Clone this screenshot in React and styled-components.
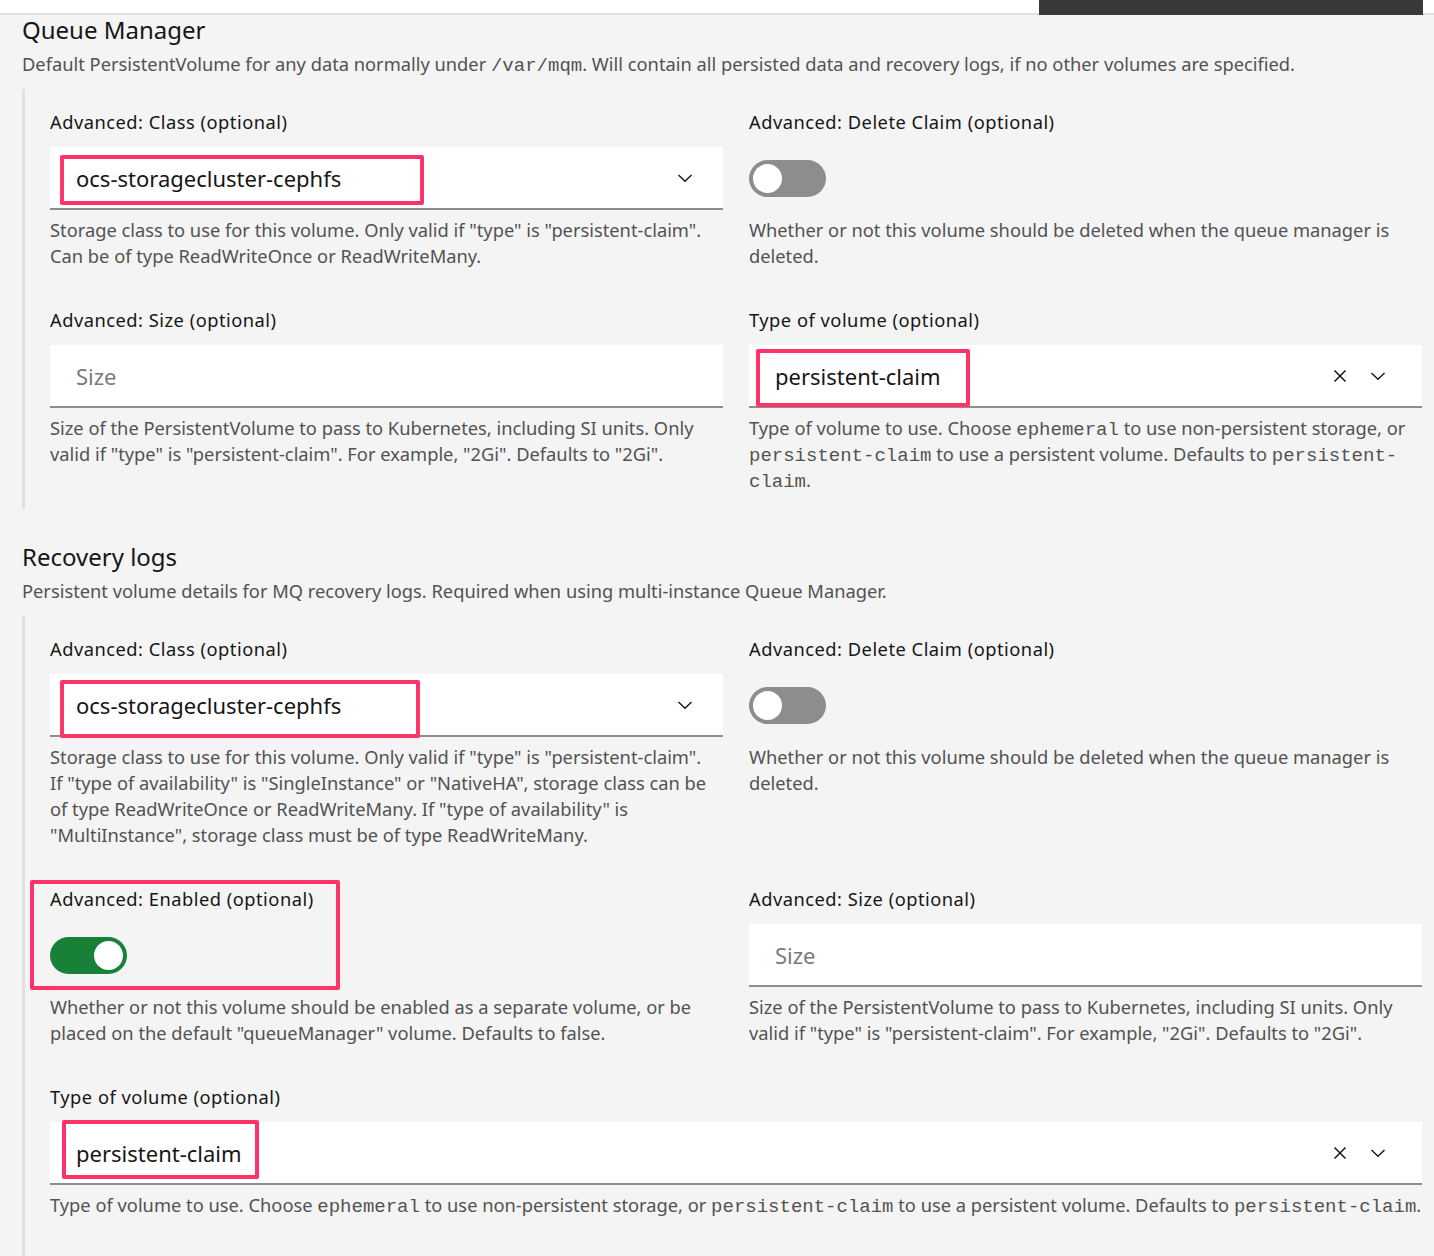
import React from 'react';
import styled, { createGlobalStyle } from 'styled-components';

const GlobalStyle = createGlobalStyle`
  html, body {
    margin: 0;
    padding: 0;
    background: #f4f4f4;
  }
  body {
    font-family: 'Noto Sans', 'Open Sans', sans-serif;
    color: #161616;
  }
  * {
    box-sizing: border-box;
  }
`;

const Page = styled.div`
  min-height: 1256px;
  background: #f4f4f4;
`;

const TopBar = styled.div`
  height: 15px;
  background: #fff;
  border-bottom: 2px solid #e0e0e0;
  display: flex;
  justify-content: flex-end;
  padding-right: 11px;
`;

const DarkTab = styled.div`
  width: 384px;
  height: 15px;
  background: #393939;
`;

const Content = styled.div`
  padding: 0 12px 0 22px;
`;

const SectionTitle = styled.h2`
  margin: ${(p) => (p.$first ? '0' : '33px')} 0 0;
  font-size: 24px;
  line-height: 30px;
  font-weight: 400;
  color: #161616;
`;

const SectionDesc = styled.p`
  margin: 6px 0 0;
  font-size: 18.3px;
  line-height: 26px;
  color: #525252;
`;

const Group = styled.div`
  margin-top: 12px;
  border-left: 3px solid #e0e0e0;
  padding: 20px 0 ${(p) => p.$bottom || 16}px 25px;
  display: grid;
  grid-template-columns: 1fr 1fr;
  column-gap: 26px;
  row-gap: 38px;
`;

const Field = styled.div`
  position: relative;
  grid-column: ${(p) => (p.$wide ? '1 / -1' : 'auto')};
`;

const Label = styled.div`
  font-size: 18.3px;
  line-height: 26px;
  letter-spacing: 0.5px;
  color: #161616;
`;

const Helper = styled.div`
  margin-top: ${(p) => (p.$afterToggle ? 20 : 7)}px;
  padding-right: ${(p) => (p.$wide ? 0 : 10)}px;
  font-size: 18.3px;
  line-height: 26px;
  color: #525252;
`;

const Mono = styled.code`
  font-family: 'Liberation Mono', 'DejaVu Sans Mono', monospace;
  font-size: 19px;
  line-height: 1;
  color: #525252;
`;

const SelectBox = styled.div`
  position: relative;
  margin-top: 12px;
  height: 63px;
  background: #fff;
  border-bottom: 2px solid #8d8d8d;
  display: flex;
  align-items: center;
  padding: 0 26px;
  font-size: 22px;
  color: ${(p) => (p.$placeholder ? '#7a7a7a' : '#161616')};
`;

const Value = styled.span`
  flex: 1;
`;

const Icons = styled.div`
  display: flex;
  align-items: center;
  gap: 22px;
  margin-right: ${(p) => (p.$clearable ? 10 : 4)}px;
  svg {
    display: block;
  }
`;

const Highlight = styled.div`
  position: absolute;
  left: ${(p) => p.$left}px;
  top: ${(p) => p.$top}px;
  width: ${(p) => p.$w}px;
  height: ${(p) => p.$h}px;
  border: 4px solid #ff3368;
  border-radius: 2px;
  pointer-events: none;
`;

const Toggle = styled.div`
  position: relative;
  margin-top: 25px;
  width: 77px;
  height: 37px;
  border-radius: 19px;
  background: ${(p) => (p.$on ? '#198038' : '#8d8d8d')};

  &::after {
    content: '';
    position: absolute;
    top: 4px;
    left: ${(p) => (p.$on ? '44px' : '4px')};
    width: 29px;
    height: 29px;
    border-radius: 50%;
    background: #fff;
  }
`;

const Chevron = () => (
  <svg width="16" height="16" viewBox="0 0 16 16" fill="none">
    <path d="M1.5 5 L8 11.2 L14.5 5" stroke="#161616" strokeWidth="1.4" />
  </svg>
);

const Close = () => (
  <svg width="16" height="16" viewBox="0 0 16 16" fill="none">
    <path d="M2.5 2.5 L13.5 13.5 M13.5 2.5 L2.5 13.5" stroke="#161616" strokeWidth="1.5" />
  </svg>
);

const Select = ({ value, clearable, placeholder, box }) => (
  <SelectBox $placeholder={!value}>
    <Value>{value || placeholder}</Value>
    {value && (
      <Icons $clearable={clearable}>
        {clearable && <Close />}
        <Chevron />
      </Icons>
    )}
    {box && <Highlight $left={box.left} $top={box.top} $w={box.w} $h={box.h} />}
  </SelectBox>
);

const typeHelp = (
  <>
    Type of volume to use. Choose <Mono>ephemeral</Mono> to use non-persistent storage, or{' '}
    <Mono>persistent-claim</Mono> to use a persistent volume. Defaults to{' '}
    <Mono>persistent-claim</Mono>.
  </>
);

const sizeHelp =
  'Size of the PersistentVolume to pass to Kubernetes, including SI units. Only valid if "type" is "persistent-claim". For example, "2Gi". Defaults to "2Gi".';

const deleteHelp =
  'Whether or not this volume should be deleted when the queue manager is deleted.';

const App = () => (
  <Page>
    <GlobalStyle />
    <TopBar>
      <DarkTab />
    </TopBar>
    <Content>
      <SectionTitle $first>Queue Manager</SectionTitle>
      <SectionDesc>
        Default PersistentVolume for any data normally under <Mono>/var/mqm</Mono>. Will contain all
        persisted data and recovery logs, if no other volumes are specified.
      </SectionDesc>
      <Group>
        <Field>
          <Label>Advanced: Class (optional)</Label>
          <Select value="ocs-storagecluster-cephfs" box={{ left: 10, top: 8, w: 364, h: 50 }} />
          <Helper>
            Storage class to use for this volume. Only valid if "type" is "persistent-claim". Can be of
            type ReadWriteOnce or ReadWriteMany.
          </Helper>
        </Field>
        <Field>
          <Label>Advanced: Delete Claim (optional)</Label>
          <Toggle />
          <Helper $afterToggle>{deleteHelp}</Helper>
        </Field>
        <Field>
          <Label>Advanced: Size (optional)</Label>
          <Select placeholder="Size" />
          <Helper>{sizeHelp}</Helper>
        </Field>
        <Field>
          <Label>Type of volume (optional)</Label>
          <Select value="persistent-claim" clearable box={{ left: 7, top: 4, w: 214, h: 58 }} />
          <Helper>{typeHelp}</Helper>
        </Field>
      </Group>

      <SectionTitle>Recovery logs</SectionTitle>
      <SectionDesc>
        Persistent volume details for MQ recovery logs. Required when using multi-instance Queue Manager.
      </SectionDesc>
      <Group $bottom={40}>
        <Field>
          <Label>Advanced: Class (optional)</Label>
          <Select value="ocs-storagecluster-cephfs" box={{ left: 10, top: 6, w: 360, h: 58 }} />
          <Helper>
            Storage class to use for this volume. Only valid if "type" is "persistent-claim". If "type of
            availability" is "SingleInstance" or "NativeHA", storage class can be of type ReadWriteOnce or
            ReadWriteMany. If "type of availability" is "MultiInstance", storage class must be of type
            ReadWriteMany.
          </Helper>
        </Field>
        <Field>
          <Label>Advanced: Delete Claim (optional)</Label>
          <Toggle />
          <Helper $afterToggle>{deleteHelp}</Helper>
        </Field>
        <Field>
          <Label>Advanced: Enabled (optional)</Label>
          <Toggle $on />
          <Highlight $left={-20} $top={-6} $w={310} $h={110} />
          <Helper $afterToggle>
            Whether or not this volume should be enabled as a separate volume, or be placed on the default
            "queueManager" volume. Defaults to false.
          </Helper>
        </Field>
        <Field>
          <Label>Advanced: Size (optional)</Label>
          <Select placeholder="Size" />
          <Helper>{sizeHelp}</Helper>
        </Field>
        <Field $wide>
          <Label>Type of volume (optional)</Label>
          <Select value="persistent-claim" clearable box={{ left: 12, top: -2, w: 197, h: 59 }} />
          <Helper $wide>{typeHelp}</Helper>
        </Field>
      </Group>
    </Content>
  </Page>
);

export default App;
